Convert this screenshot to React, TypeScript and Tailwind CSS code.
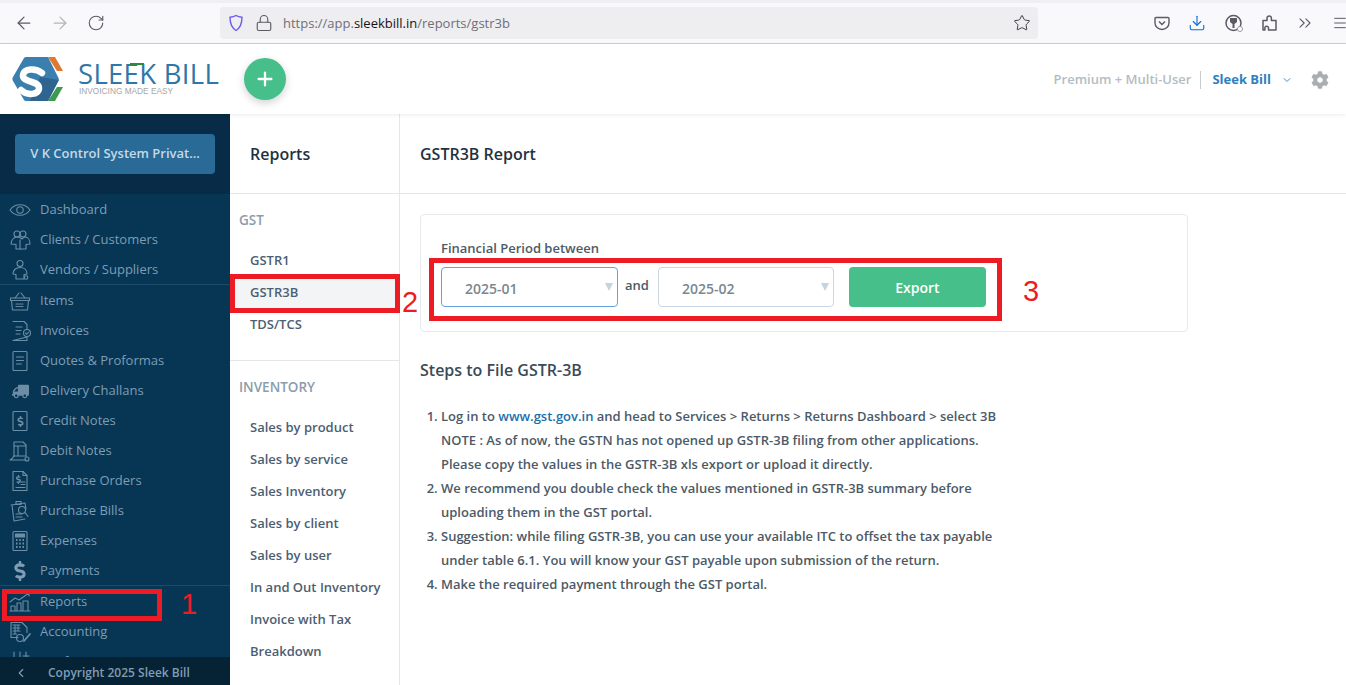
import type { ReactNode } from "react";
import { ArrowLeft, ArrowRight, RotateCw, Lock, Star, Download, ChevronsRight, Menu, Plus, ChevronDown, ChevronLeft } from "lucide-react";
import { FaCog, FaDollarSign, FaTruck } from "react-icons/fa";

function Ico({ children }: { children: ReactNode }) {
  return (
    <svg width="24" height="24" viewBox="0 0 24 24" fill="none" stroke="#6d8da6" strokeWidth="1.1" strokeLinejoin="round" strokeLinecap="round">
      {children}
    </svg>
  );
}

const eye = <Ico><path d="M2 12c5-7 15-7 20 0-5 7-15 7-20 0z" /><circle cx="12" cy="12" r="3.200" /></Ico>;
const clients = <Ico><circle cx="9" cy="6" r="3" /><circle cx="15" cy="6" r="3" /><path d="M3 16c0-4 3-7 6-7 2 0 4 1 5 2 1-1 2-2 3-2 3 0 5 3 5 7l-4 .5V21H8v-4.500z" /><path d="M12 12v9" /></Ico>;
const vendors = <Ico><circle cx="12" cy="5.500" r="3" /><path d="M5 16c0-4 3-6.500 7-6.500s7 2.500 7 6.500l-3 .5V21H8v-4.500z" /><circle cx="18" cy="19.500" r="1.800" /></Ico>;
const basket = <Ico><path d="M7 9l4-5M17 9l-4-5" /><path d="M2.500 9h19v2.500h-19z" /><path d="M3.500 11.500l1 9.500h15l1-9.500" /><path d="M8 15h8M8 17.500h8" strokeDasharray="1 1" /></Ico>;
const invoice = <Ico><path d="M5 2.500h11l3 3v5M19 18v3.500H5z" /><path d="M8 8h6M8 11.500h5M8 15h4" /><circle cx="19" cy="14" r="3.500" /><path d="M17.500 14l1.200 1.200 2-2.200" /></Ico>;
const quote = <Ico><rect x="5" y="2.500" width="14" height="19" rx="1" /><path d="M8.500 8h7M8.500 11.500h7M8.500 15h5" /></Ico>;
const truck = <FaTruck size={17} color="#6d8da6" className="-scale-x-100" />;
const credit = (
  <span className="relative flex items-center justify-center">
    <Ico><rect x="5" y="2.500" width="14" height="19" rx="1" /></Ico>
    <FaDollarSign size={11} color="#6d8da6" className="absolute" />
  </span>
);
const debit = <Ico><path d="M6 17V3h9l3 3v11" /><path d="M6 7h12M10 7v10M6 17h12" /><path d="M2 21c2-1 3-2 4-4M3 21h15" /><circle cx="19" cy="20" r="2" /></Ico>;
const orders = (
  <span className="relative flex items-center justify-center">
    <Ico><path d="M5 2.500h10l4 4v15H5z" /><path d="M15 2.500v4h4M13 13h4M13 15.500h4M8 18.500h9" /></Ico>
    <FaDollarSign size={9} color="#6d8da6" className="absolute top-[6px] left-[6px]" />
  </span>
);
const bills = <Ico><path d="M3 6l14-2 1 6M4 6l2 16 11-2" /><rect x="8" y="2.500" width="5" height="3" /><circle cx="14" cy="11" r="3.500" /><path d="M17 13.500l3 4M8 15h6M8 18h6" /></Ico>;
const calc = (
  <Ico>
    <rect x="5" y="2.500" width="14" height="19" rx="1" />
    <rect x="7.500" y="5" width="9" height="3" fill="#6d8da6" />
    <path d="M8 11h1.500M11.250 11h1.500M14.500 11h1.500M8 14.500h1.500M11.250 14.500h1.500M14.500 14.500h1.500M8 18h1.500M11.250 18h1.500M14.500 18h1.500" strokeWidth="2" strokeLinecap="butt" />
  </Ico>
);
const dollar = <FaDollarSign size={20} color="#7f9db4" />;
const reports = <Ico><path d="M2 12l5-4 4 2 10-7M18 3h3v3" /><path d="M3 21v-5h4v5M9 21v-8h4v8M15 21v-10h5v10M2 21h20" /></Ico>;
const accounting = (
  <Ico>
    <path d="M3 2.500h11l5 5v5M3 2.500v15h7" />
    <path d="M5 5h7M5 8h7M5 11h7M5 14h4M7 5v9M10 5v6" strokeDasharray="1.500 .5" />
    <circle cx="12" cy="18" r="3.500" />
    <path d="M16 21l6-7" strokeWidth="1.800" />
  </Ico>
);
const configure = <Ico><path d="M6 2v20M12 2v20M18 2v20M3 8h6M9 14h6M15 6h6" /></Ico>;

const sidebarTop = [
  { label: "Dashboard", icon: eye },
  { label: "Clients / Customers", icon: clients },
  { label: "Vendors / Suppliers", icon: vendors },
];

const sidebarMid = [
  { label: "Items", icon: basket },
  { label: "Invoices", icon: invoice },
  { label: "Quotes & Proformas", icon: quote },
  { label: "Delivery Challans", icon: truck },
  { label: "Credit Notes", icon: credit },
  { label: "Debit Notes", icon: debit },
  { label: "Purchase Orders", icon: orders },
  { label: "Purchase Bills", icon: bills },
  { label: "Expenses", icon: calc },
  { label: "Payments", icon: dollar },
];

const sidebarBottom = [
  { label: "Reports", icon: reports },
  { label: "Accounting", icon: accounting },
  { label: "Configure", icon: configure },
];

const inventoryLinks = ["Sales by product", "Sales by service", "Sales Inventory", "Sales by client", "Sales by user", "In and Out Inventory", "Invoice with Tax", "Breakdown"];

function SideItem({ label, icon }: { label: string; icon: ReactNode }) {
  return (
    <div className="flex h-[30px] items-center text-[13px] font-normal text-[#7f9db4]">
      <div className="flex w-[40px] justify-center">{icon}</div>
      <span>{label}</span>
    </div>
  );
}

function Logo() {
  return (
    <div className="flex w-[244px] shrink-0 items-center">
      <svg width="52" height="44" viewBox="0 0 52 44" className="ml-[12px]">
        <path d="M36 0h7l8 14h-6z" fill="#e0782f" />
        <path d="M45 30h6l-8 14h-7z" fill="#3f9a4f" />
        <path d="M14 0h22l11 22-11 22H14a3 3 0 0 1-2-1L1 24a4 4 0 0 1 0-4L12 1a3 3 0 0 1 2-1z" fill="#3a7fae" />
        <path d="M28 20l19 3-11 21H18z" fill="#2f6490" />
        <path d="M30 16C24 11 12 11 11 18 10 26 27 23 27 31 27 38 15 39 9 33" fill="none" stroke="#fff" strokeWidth="6.500" strokeLinecap="round" />
      </svg>
      <div className="ml-[14px] flex flex-col">
        <div className="relative h-[22px] whitespace-nowrap text-[27.500px] leading-[22px] font-normal tracking-[0.3px] text-[#2f77a8]">
          SLEEK BILL
          <span className="absolute top-[0px] left-[52px] h-[2px] w-[14px] bg-[#2e8b3d]" />
        </div>
        <div className="mt-[2px] pl-[1px] font-['Liberation_Sans',sans-serif] text-[8.300px] leading-[9px] text-[#a5a5a5]">INVOICING MADE EASY</div>
      </div>
    </div>
  );
}

function Select({ value, focused }: { value: string; focused?: boolean }) {
  return (
    <div className={`relative flex h-[40px] items-center rounded-[4px] border bg-white pt-[2px] pl-[23px] text-[14px] font-semibold text-[#7b8791] ${focused ? "w-[177px] border-[#63a4e0]" : "w-[176px] border-[#c9d8e2]"}`}>
      {value}
      <span className="absolute top-[15px] right-[4px] h-0 w-0 border-x-[4px] border-t-[8px] border-x-transparent border-t-[#c5d5e0]" />
    </div>
  );
}

export default function App() {
  return (
    <div className="relative h-[685px] w-[1346px] overflow-hidden bg-white font-['Open_Sans',sans-serif]">
      {/* browser chrome */}
      <div className="h-[3px] bg-[#f0f0f4]" />
      <div className="flex h-[41px] items-center border-b border-[#cfcfd3] bg-[#f9f9fb]">
        <div className="flex w-[220px] shrink-0 items-center pl-[14px] text-[#5b5b66]">
          <ArrowLeft size={20} strokeWidth={1.5} />
          <ArrowRight size={20} strokeWidth={1.5} className="ml-[16px] text-[#b4b4b9]" />
          <RotateCw size={18} strokeWidth={1.5} className="ml-[17px]" />
        </div>
        <div className="flex h-[32px] w-[818px] shrink-0 items-center rounded-[4px] bg-[#eeeef0] pr-[7px] pl-[8px] text-[13px]">
          <svg width="16" height="18" viewBox="0 0 16 18" fill="none" stroke="#6a5cf0" strokeWidth="1.400"><path d="M8 1.500c2 1.200 4 1.600 6 1.800 0 6-1.500 10.500-6 13.200C3.500 13.800 2 9.300 2 3.300c2-.2 4-.6 6-1.800z" /></svg>
          <Lock size={18} strokeWidth={1.5} className="ml-[11px] text-[#5b5b66]" />
          <span className="mt-[1px] ml-[10px] font-normal text-[#6f6f78]">https://app.<span className="text-[#15141a]">sleekbill.in</span>/reports/gstr3b</span>
          <Star size={18} strokeWidth={1.3} className="ml-auto text-[#3a3a42]" />
        </div>
        <div className="flex flex-1 items-center pl-[116px] text-[#5b5b66]">
          <svg width="16" height="16" viewBox="0 0 16 16" fill="none" stroke="currentColor" strokeWidth="1.400" className="shrink-0"><path d="M2 2.500h12a1 1 0 0 1 1 1V8a7 6.500 0 0 1-14 0V3.500a1 1 0 0 1 1-1z" /><path d="M5 6.500l3 3 3-3" /></svg>
          <Download size={18} strokeWidth={1.5} className="ml-[18px] shrink-0 text-[#0a6ee0]" />
          <svg width="20" height="20" viewBox="0 0 20 20" className="ml-[18px] shrink-0"><circle cx="9.500" cy="10" r="7.500" fill="none" stroke="currentColor" strokeWidth="1.500" /><path d="M6 5h7v4l-2.500 2v4h-2v-4L6 9z" fill="currentColor" /><circle cx="16" cy="16" r="2.500" fill="#fff" stroke="#9a9aa2" /></svg>
          <svg width="18" height="18" viewBox="0 0 18 18" fill="none" stroke="currentColor" strokeWidth="1.500" strokeLinejoin="round" className="ml-[17px] shrink-0"><path d="M2 6.500h4V4.200a2.200 2.200 0 1 1 4.400 0v2.300H15V16H7.500v-2a1.800 1.800 0 1 0-3.600 0v2H2z" /></svg>
          <ChevronsRight size={20} strokeWidth={1.3} className="ml-[16px] shrink-0" />
          <Menu size={16} strokeWidth={1.5} className="ml-[17px] shrink-0" />
        </div>
      </div>

      {/* app header */}
      <div className="relative z-10 flex h-[70px] items-center bg-white shadow-[0_1px_4px_rgba(0,0,0,0.08)]">
        <Logo />
        <div className="flex h-[42px] w-[42px] items-center justify-center rounded-full bg-[#46bf8a] text-white shadow-[0_3px_8px_rgba(0,0,0,0.18)]">
          <Plus size={22} strokeWidth={2.5} />
        </div>
        <div className="ml-auto flex items-center pt-[1px] pr-[17px] text-[13px] font-semibold">
          <span className="text-[#b4bcc3]">Premium + Multi-User</span>
          <span className="mr-[11px] ml-[9px] h-[18px] w-px bg-[#c8ccd0]" />
          <span className="font-bold text-[#2d7fbe]">Sleek Bill</span>
          <ChevronDown size={12} className="ml-[10px] text-[#4a8cc0]" />
          <FaCog size={18} className="ml-[18px] text-[#a9aeb3]" />
        </div>
      </div>

      <div className="flex h-[571px]">
        {/* left sidebar */}
        <div className="flex w-[230px] shrink-0 flex-col bg-[#063654]">
          <div className="flex h-[80px] shrink-0 items-center bg-[#082c47] pl-[15px]">
            <div className="flex h-[40px] w-[200px] items-center justify-center rounded-[4px] bg-[#2a6a97] text-[13px] font-semibold text-[#c5d9e6]">V K Control System Privat...</div>
          </div>
          <div className="min-h-0 flex-1 overflow-hidden">
            <div className="h-[91px] border-b border-[#1c4c6b] pt-[1px]">
              {sidebarTop.map((item) => <SideItem key={item.label} {...item} />)}
            </div>
            <div className="h-[301px] border-b border-[#1c4c6b] pt-[1px]">
              {sidebarMid.map((item) => <SideItem key={item.label} {...item} />)}
            </div>
            <div className="pt-[1px]">
              {sidebarBottom.map((item) => <SideItem key={item.label} {...item} />)}
            </div>
          </div>
          <div className="flex h-[28px] shrink-0 items-center bg-[#062235] pt-[3px] text-[12px] font-semibold text-[#7f9db4]">
            <ChevronLeft size={14} className="ml-[14px]" />
            <span className="ml-[20px]">Copyright 2025 Sleek Bill</span>
          </div>
        </div>

        {/* reports menu */}
        <div className="w-[170px] shrink-0 border-r border-[#e6e6e6]">
          <div className="flex h-[80px] items-center border-b border-[#e6e6e6] pl-[20px] text-[16px] font-semibold text-[#1f3242]">Reports</div>
          <div className="mt-[16px] pl-[9px] text-[13.500px] leading-[20px] font-semibold text-[#8b9cab]">GST</div>
          <div className="mt-[15px] border-b border-[#e6e6e6] pb-[19px] text-[13px] font-semibold text-[#4c6072]">
            <div className="flex h-[32px] items-center pl-[20px]">GSTR1</div>
            <div className="flex h-[32px] items-center bg-[#f3f4f6] pl-[20px]">GSTR3B</div>
            <div className="flex h-[32px] items-center pl-[20px]">TDS/TCS</div>
          </div>
          <div className="mt-[16px] pl-[9px] text-[13.500px] leading-[20px] font-semibold text-[#8b9cab]">INVENTORY</div>
          <div className="mt-[15px] text-[13px] font-semibold text-[#4c6072]">
            {inventoryLinks.map((link) => (
              <div key={link} className="flex h-[32px] items-center pl-[20px]">{link}</div>
            ))}
          </div>
        </div>

        {/* content */}
        <div className="flex-1">
          <div className="flex h-[80px] items-center border-b border-[#e6e6e6] pl-[20px] text-[16px] font-semibold text-[#1f3242]">GSTR3B Report</div>
          <div className="pl-[20px]">
            <div className="mt-[20px] h-[118px] w-[768px] rounded-[4px] border border-[#e6eaec] pt-[24px] pl-[20px]">
              <div className="text-[13px] leading-[18px] font-semibold text-[#4c5a66]">Financial Period between</div>
              <div className="mt-[10px] flex items-center">
                <Select value="2025-01" focused />
                <span className="mr-[9px] ml-[7px] -mt-[2px] text-[13px] font-semibold text-[#4c5a66]">and</span>
                <Select value="2025-02" />
                <div className="ml-[15px] flex h-[40px] w-[137px] items-center justify-center rounded-[4px] bg-[#46bf8a] text-[14px] font-semibold text-white">Export</div>
              </div>
            </div>
            <div className="mt-[27px] text-[16px] leading-[22px] font-semibold text-[#3c4a56]">Steps to File GSTR-3B</div>
            <ol className="mt-[23px] list-decimal pl-[21px] text-[13px] leading-[24px] font-semibold text-[#4c5a66]">
              <li>Log in to <span className="text-[#1d6fa8]">www.gst.gov.in</span> and head to Services &gt; Returns &gt; Returns Dashboard &gt; select 3B<br />NOTE : As of now, the GSTN has not opened up GSTR-3B filing from other applications.<br />Please copy the values in the GSTR-3B xls export or upload it directly.</li>
              <li>We recommend you double check the values mentioned in GSTR-3B summary before<br />uploading them in the GST portal.</li>
              <li>Suggestion: while filing GSTR-3B, you can use your available ITC to offset the tax payable<br />under table 6.1. You will know your GST payable upon submission of the return.</li>
              <li>Make the required payment through the GST portal.</li>
            </ol>
          </div>
        </div>
      </div>

      {/* red annotations drawn on top of the screenshot */}
      <div className="absolute top-[589px] left-[2px] h-[32px] w-[160px] border-[5px] border-[#ed1c24]" />
      <div className="absolute top-[274px] left-[230px] h-[39px] w-[170px] border-[5px] border-[#ed1c24]" />
      <div className="absolute top-[258px] left-[429px] h-[63px] w-[573px] border-[5px] border-[#ed1c24]" />
      <span className="absolute top-[586px] left-[181px] font-['Liberation_Sans',sans-serif] text-[29px] leading-[36px] text-[#ed1c24]">1</span>
      <span className="absolute top-[284px] left-[402px] font-['Liberation_Sans',sans-serif] text-[29px] leading-[36px] text-[#ed1c24]">2</span>
      <span className="absolute top-[273px] left-[1023px] font-['Liberation_Sans',sans-serif] text-[29px] leading-[36px] text-[#ed1c24]">3</span>
    </div>
  );
}
